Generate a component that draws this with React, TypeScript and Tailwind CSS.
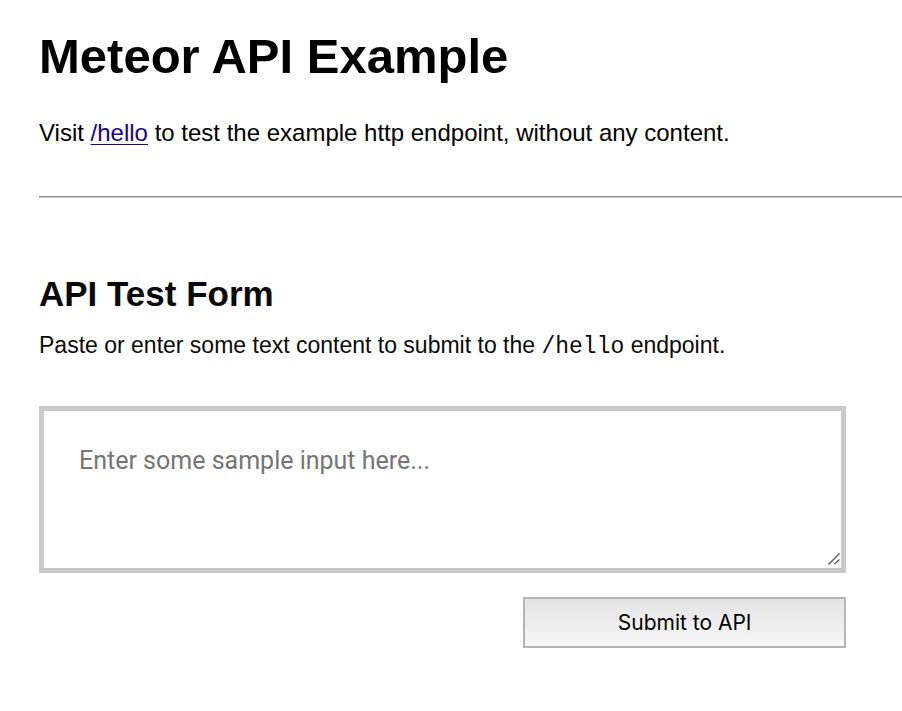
import React from "react";

export default function App() {
  return (
    <main className="overflow-x-hidden bg-white pt-7 pb-16 pl-[39px] font-['Liberation_Sans',Arial,sans-serif] text-black">
      <h1 className="text-[49px] leading-[56px] font-bold">Meteor API Example</h1>
      <p className="mt-8 text-2xl leading-[34px]">
        Visit{" "}
        <a href="/hello" className="text-[#200082] underline decoration-1 underline-offset-3">/hello</a>{" "}
        to test the example http endpoint, without any content.
      </p>
      <hr className="mt-[46px] h-0.5 border border-r-0 border-t-[#8c8c8c] border-b-[#c8c8c8] border-l-[#8c8c8c]" />
      <form className="mt-[76px] mr-14" onSubmit={(event) => event.preventDefault()}>
        <h2 className="text-[35px] leading-10 font-bold text-[#0a0a0a]">API Test Form</h2>
        <label htmlFor="content" className="mt-4 block text-[23px] leading-[30px] text-[#0a0a0a]">
          Paste or enter some text content to submit to the{" "}
          <code className="font-['Liberation_Mono',monospace] text-[23px]">/hello</code> endpoint.
        </label>
        <div className="relative mt-11">
          <textarea
            id="content"
            placeholder="Enter some sample input here..."
            className="block h-[167px] w-full resize-none border-[5px] border-[#cacaca] px-[35px] py-[34px] font-['Roboto',sans-serif] text-[25px] leading-8 placeholder:text-[#757575]"
          />
          <svg
            aria-hidden="true"
            viewBox="0 0 12 12"
            className="pointer-events-none absolute right-1.5 bottom-2 h-3 w-3"
            fill="none"
            stroke="#555555"
            strokeWidth="1.3"
          >
            <path d="M0.5 11.5L11.5 0.5M6.5 11L11.5 6.5" />
          </svg>
        </div>
        <button
          type="submit"
          className="mt-6 ml-auto block h-[51px] w-2/5 border-2 border-[#b5b5b5] bg-linear-to-b from-[#e4e4e4] to-[#f7f7f7] font-['Inter',sans-serif] text-[21px]"
        >
          Submit to API
        </button>
      </form>
    </main>
  );
}
